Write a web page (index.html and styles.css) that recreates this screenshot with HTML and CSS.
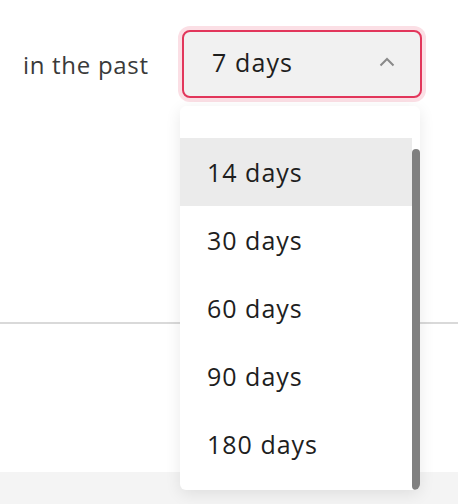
FILE: index.html
```html
<!DOCTYPE html>
<html lang="en">
<head>
    <meta charset="UTF-8">
    <meta name="viewport" content="width=device-width, initial-scale=1.0">
    <title>Date Range Filter</title>
    <link rel="stylesheet" href="styles.css">
</head>
<body>

    <div class="filter-row">
        <span class="filter-label">in the past</span>
        <div class="select-wrap">
            <!-- Open select box -->
            <div class="select-box">
                <span class="select-value">7 days</span>
                <svg class="chevron" width="16" height="10" viewBox="0 0 16 10">
                    <path d="M1.5 8.5 L8 2 L14.5 8.5" fill="none" stroke="#8a8a8a" stroke-width="2"/>
                </svg>
            </div>

            <!-- Dropdown list -->
            <div class="dropdown">
                <ul class="options">
                    <li class="spacer"></li>
                    <li class="option active">14 days</li>
                    <li class="option">30 days</li>
                    <li class="option">60 days</li>
                    <li class="option">90 days</li>
                    <li class="option">180 days</li>
                </ul>
                <div class="scroll-thumb"></div>
            </div>
        </div>
    </div>

    <div class="divider"></div>
    <div class="footer-band"></div>

</body>
</html>
```

FILE: styles.css
```css
/* Page */
body {
    margin: 0;
    padding: 0;
    background-color: #fff;
    font-family: "Open Sans", sans-serif;
    color: #222;
}

/* Label + select row */
.filter-row {
    display: flex;
    align-items: center;
    padding: 30px 0 0 23px;
    height: 68px;
}

.filter-label {
    width: 127px;
    flex-shrink: 0;
    white-space: nowrap;
    font-size: 24px;
    letter-spacing: 0.7px;
    color: #3a3a3a;
    margin-right: 32px;
}

.select-wrap {
    position: relative;
}

/* Select box in focus state */
.select-box {
    box-sizing: border-box;
    width: 240px;
    height: 68px;
    display: flex;
    align-items: center;
    justify-content: space-between;
    padding: 0 25px 0 28px;
    background-color: #f1f1f1;
    border: 2px solid #e2365b;
    border-radius: 8px;
    box-shadow: 0 0 0 4px #fbdfe5;
}

.select-value {
    font-size: 25px;
    letter-spacing: 1.1px;
    color: #1e1e1e;
    margin-bottom: 4px;
}

.chevron {
    display: block;
    margin-top: -4px;
}

/* Dropdown overlay */
.dropdown {
    position: absolute;
    top: 76px;
    left: -2px;
    width: 240px;
    height: 384px;
    background-color: #fff;
    border-radius: 6px;
    box-shadow: 0 4px 16px rgba(0, 0, 0, 0.09);
    overflow: hidden;
    z-index: 2;
}

.options {
    list-style-type: none;
    margin: 0;
    padding: 0;
    width: 232px;
}

.spacer {
    height: 32px;
}

.option {
    height: 68px;
    display: flex;
    align-items: center;
    padding-left: 27px;
    font-size: 25px;
    letter-spacing: 1px;
    color: #1e1e1e;
}

.option.active {
    background-color: #ebebeb;
}

.scroll-thumb {
    position: absolute;
    right: 0;
    top: 43px;
    bottom: 0;
    width: 8px;
    background-color: #808080;
    border-radius: 4px;
}

/* Lower page parts */
.divider {
    margin-top: 224px;
    height: 2px;
    background-color: #d9d9d9;
}

.footer-band {
    margin-top: 148px;
    height: 32px;
    background-color: #f4f4f4;
}
```
